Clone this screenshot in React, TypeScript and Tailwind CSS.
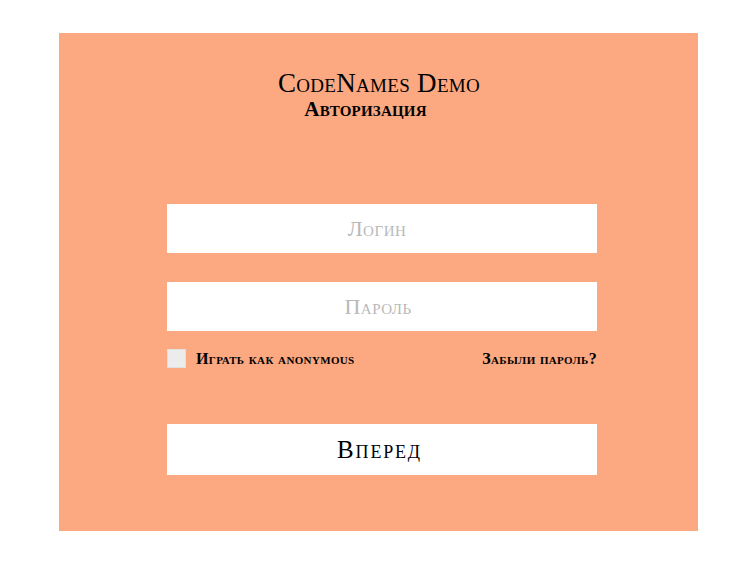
import React from "react"

const serif = { fontFamily: '"Liberation Serif", "DejaVu Serif", serif' }

export default function App() {
  return (
    <div className="min-h-screen bg-white pt-[33px] pl-[59px]" style={serif}>
      <div className="w-[639px] h-[498px] bg-[#fca880] flex flex-col">
        <div className="pt-[34px] flex flex-col items-center text-black [font-variant:small-caps]">
          <h1 className="text-[27px] leading-[32px] tracking-[0.3px] ml-[1px]">CodeNames Demo</h1>
          <h2 className="text-[21px] leading-[20px] font-bold tracking-[0.2px] -ml-[26px]">Авторизация</h2>
        </div>

        <form className="ml-[108px] w-[430px] mt-[85px] flex flex-col" onSubmit={(e) => e.preventDefault()}>
          <input
            type="text"
            placeholder="Логин"
            className="h-[49px] w-full bg-white pr-[10px] text-center text-[22px] tracking-[0.5px] outline-none placeholder:text-[#b9b9b9] [font-variant:small-caps]"
            style={serif}
          />
          <input
            type="password"
            placeholder="Пароль"
            className="mt-[29px] h-[49px] w-full bg-white pr-[8px] text-center text-[22px] tracking-[0.5px] outline-none placeholder:text-[#b9b9b9] [font-variant:small-caps]"
            style={serif}
          />

          <div className="mt-[18px] h-[19px] flex items-center justify-between text-[16px] leading-[19px] font-bold tracking-[0.35px] text-black [font-variant:small-caps]">
            <label className="flex items-center gap-[10px]">
              <span className="w-[19px] h-[19px] bg-[#ececec] border border-[#e0e0e0]"></span>
              Играть как anonymous
            </label>
            <a href="#" className="text-black">Забыли пароль?</a>
          </div>

          <button
            type="submit"
            className="mt-[56px] h-[51px] w-full bg-white pr-[5px] text-center text-[25px] tracking-[1.8px] text-black [font-variant:small-caps]"
            style={serif}
          >
            Вперед
          </button>
        </form>
      </div>
    </div>
  )
}
